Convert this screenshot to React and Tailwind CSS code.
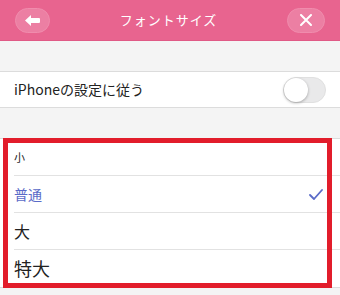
export default function App() {
  const font = { fontFamily: '"Noto Sans CJK JP", "Noto Sans", sans-serif' };
  return (
    <div className="relative w-[340px] h-[295px] overflow-hidden bg-[#f4f4f4]" style={font}>
      {/* Header */}
      <div className="h-[41px] bg-[#e8648f] flex items-center justify-between px-[15px] border-b border-[#e05a86]">
        <button className="w-[35px] h-[25px] rounded-full bg-[#ec7fa3] border border-[#f08cad] flex items-center justify-center">
          <svg width="15" height="11" viewBox="0 0 15 11">
            <path d="M0 5.5 L6 0 L6 3 L14 3 Q15 3 15 4 L15 7 Q15 8 14 8 L6 8 L6 11 Z" fill="#fff" />
          </svg>
        </button>
        <div className="text-white text-[13px] tracking-[1px]">フォントサイズ</div>
        <button className="w-[38px] h-[25px] rounded-full bg-[#ec7fa3] border border-[#f08cad] flex items-center justify-center">
          <svg width="12" height="12" viewBox="0 0 12 12">
            <path d="M1 1 L11 11 M11 1 L1 11" stroke="#fff" strokeWidth="2" strokeLinecap="round" />
          </svg>
        </button>
      </div>

      <div className="h-[30px]" />

      {/* Toggle row */}
      <div className="h-[37px] bg-white border-y border-[#dcdcdc] flex items-center justify-between pl-[14px] pr-[14px]">
        <span className="text-[14px] text-[#222]">iPhoneの設定に従う</span>
        <div className="w-[43px] h-[26px] rounded-full bg-[#e9e9ea] border border-[#e0e0e0] flex items-center">
          <div className="w-[24px] h-[24px] rounded-full bg-white shadow-[0_1px_3px_rgba(0,0,0,0.3)]" />
        </div>
      </div>

      <div className="h-[30px]" />

      {/* Size list */}
      <div className="bg-white border-y border-[#dcdcdc]">
        <div className="h-[37px] flex items-center ml-[14px] border-b border-[#e2e2e2]">
          <span className="text-[11px] text-[#222]">小</span>
        </div>
        <div className="h-[37px] flex items-center justify-between ml-[14px] pr-[17px] border-b border-[#e2e2e2]">
          <span className="text-[14px] text-[#5a6bc8]">普通</span>
          <svg width="14" height="11" viewBox="0 0 14 11">
            <path d="M1 6 L5 10 L13 1" stroke="#5a6bc8" strokeWidth="1.8" fill="none" strokeLinecap="round" strokeLinejoin="round" />
          </svg>
        </div>
        <div className="h-[37px] flex items-center ml-[14px] border-b border-[#e2e2e2]">
          <span className="text-[16px] text-[#222]">大</span>
        </div>
        <div className="h-[37px] flex items-center ml-[14px]">
          <span className="text-[18px] text-[#222]">特大</span>
        </div>
      </div>

      {/* Red highlight annotation */}
      <div className="absolute left-[3px] top-[138px] w-[329px] h-[150px] border-[5px] border-[#e21d2b]" />
    </div>
  );
}
